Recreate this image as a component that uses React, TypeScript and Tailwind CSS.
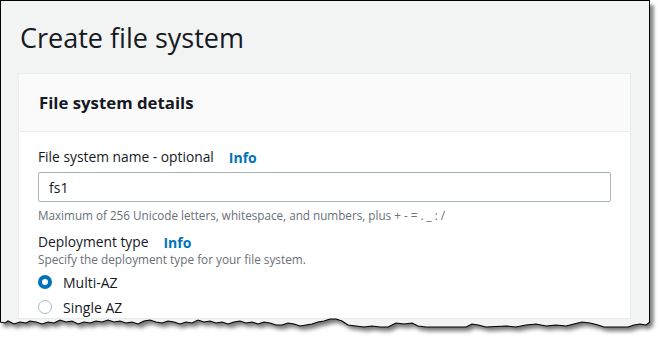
import React from "react";

const font = { fontFamily: '"Open Sans", "Noto Sans", sans-serif' };

const edge: [number, number][] = [
  [0, 322], [5, 323], [8, 321], [14, 324], [20, 322], [26, 323], [30, 321], [36, 322], [42, 324], [48, 322],
  [54, 323], [60, 320], [66, 322], [72, 321], [78, 324], [84, 322], [90, 323], [96, 321], [102, 322], [108, 320],
  [114, 322], [120, 321], [126, 323], [132, 322], [138, 324], [144, 321], [150, 320], [156, 322], [162, 323],
  [168, 321], [174, 322], [180, 324], [186, 322], [192, 323], [198, 320], [204, 322], [210, 321], [216, 323],
  [222, 322], [228, 324], [234, 322], [240, 321], [246, 323], [252, 322], [258, 324], [264, 322], [270, 323],
  [276, 325], [282, 325], [288, 323], [294, 324], [300, 326], [306, 325], [312, 324], [318, 322], [324, 321],
  [330, 319], [336, 319], [342, 321], [348, 325], [356, 326], [364, 327], [372, 326], [380, 327], [388, 327],
  [396, 323], [404, 324], [412, 323], [418, 326], [426, 327], [440, 327], [466, 327], [472, 324], [478, 325],
  [486, 327], [506, 326], [516, 327], [526, 325], [536, 324], [546, 326], [556, 325], [566, 326], [574, 324],
  [582, 322], [590, 323], [598, 325], [604, 327], [628, 327], [634, 325], [640, 324], [646, 325], [650, 322],
];

const TornEdge = () => {
  const top = 300;
  const line = edge.map(([x, y]) => `${x},${y - top}`).join(" ");
  const below = `M${line.split(" ").join(" L")} L660,${edge[edge.length - 1][1] - top} L660,38 L0,38 Z`;
  const above = `M0,-20 L${line.split(" ").join(" L")} L650,-20 Z`;
  return (
    <svg className="absolute left-0 top-[300px]" width={660} height={38} viewBox="0 0 660 38">
      <defs>
        <clipPath id="below">
          <path d={below} />
        </clipPath>
        <filter id="blur" x="-10%" y="-100%" width="120%" height="300%">
          <feGaussianBlur stdDeviation="2" />
        </filter>
      </defs>
      <path d={below} fill="#ffffff" />
      <g clipPath="url(#below)">
        <path d={above} fill="#000" opacity={0.55} transform="translate(3,4)" filter="url(#blur)" />
      </g>
      <polyline points={line} fill="none" stroke="#000" strokeWidth={1.1} />
    </svg>
  );
};

const Info = () => <span className="ml-[15px] text-[14px] font-bold text-[#0073bb]">Info</span>;

const Radio = ({ label, checked }: { label: string; checked?: boolean }) => (
  <div className="flex items-center h-[22px]">
    <span
      className={
        checked
          ? "w-[14px] h-[14px] rounded-full border-[4px] border-[#0073bb] bg-white"
          : "w-[14px] h-[14px] rounded-full border border-[#aab7b8] bg-white"
      }
    />
    <span className="ml-[11px] text-[14px] text-[#16191f]">{label}</span>
  </div>
);

export default function App() {
  return (
    <div className="relative w-[660px] h-[338px] bg-white overflow-hidden" style={font}>
      <div className="w-[650px] h-[338px] border-l border-t border-r border-black bg-[#f2f3f3] shadow-[4px_5px_3px_rgba(0,0,0,0.45)]">
        <h1 className="mt-[19px] ml-[19px] h-[36px] leading-[36px] text-[27px] text-[#16191f]">Create file system</h1>
        <div className="mt-[17px] ml-[17px] w-[613px] border border-[#eaeded] bg-white">
          <div className="h-[58px] px-[20px] flex items-center bg-[#fafafa] border-b border-[#eaeded]">
            <h2 className="text-[16.8px] font-bold text-[#16191f]">File system details</h2>
          </div>
          <div className="px-[19px] pt-[14px]">
            <div className="flex items-center h-[22px] text-[13.8px] text-[#16191f]">
              File system name - optional
              <Info />
            </div>
            <div className="mt-[4px] w-[573px] h-[30px] border border-[#aab7b8] rounded-[2px] px-[10px] flex items-center text-[14px] text-[#16191f]">
              fs1
            </div>
            <div className="mt-[5px] leading-[16px] text-[11.7px] text-[#687078]">
              Maximum of 256 Unicode letters, whitespace, and numbers, plus + - = . _ : /
            </div>
            <div className="mt-[10px] flex items-center h-[18px] text-[13.8px] text-[#16191f]">
              Deployment type
              <Info />
            </div>
            <div className="leading-[16px] text-[11.8px] text-[#687078]">
              Specify the deployment type for your file system.
            </div>
            <div className="mt-[4px] flex flex-col gap-[3px]">
              <Radio label="Multi-AZ" checked />
              <Radio label="Single AZ" />
            </div>
          </div>
        </div>
      </div>
      <TornEdge />
    </div>
  );
}
